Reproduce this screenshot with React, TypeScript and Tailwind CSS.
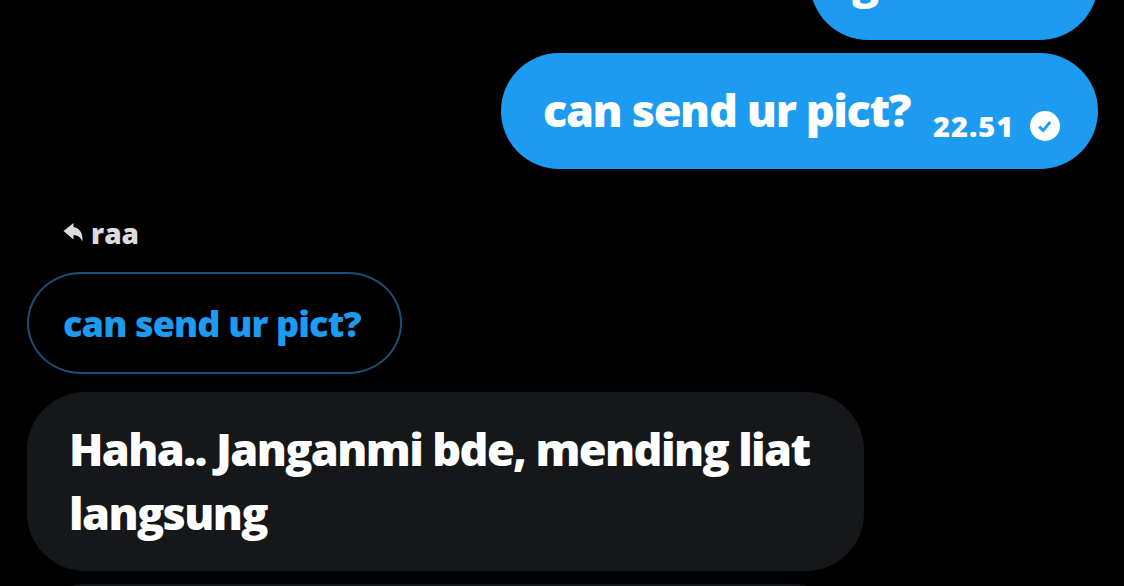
import React from 'react';

function SentBadge() {
    return (
        <svg viewBox="0 0 30 30" className="h-[30px] w-[30px] shrink-0">
            <circle cx="15" cy="15" r="15" fill="#fff" />
            <path d="M9.200 15.600l4 3.800 7-8.400" fill="none" stroke="#1d9bf0" strokeWidth="2.9" />
        </svg>
    );
}

function ReplyArrow() {
    return (
        <svg viewBox="0 0 20 19" className="h-[19px] w-[20px] shrink-0" fill="#dcdcdc">
            <path d="M.5 7.900L10.500 0v4C16.500 4.800 20.500 10.500 19.300 18.600C17.800 14.600 15 12.400 10.500 12.100v4.300z" />
        </svg>
    );
}

export default function App() {
    return (
        <div className="flex h-[586px] w-[1124px] flex-col overflow-hidden bg-black pl-[27px] pr-[26px] font-['Open_Sans',sans-serif] font-extrabold text-white whitespace-nowrap">
            {/* Outgoing */}
            <div className="-mt-[76px] flex h-[116px] w-[288px] shrink-0 self-end rounded-[58px] bg-[#1d9bf0] pl-[42px] pt-[25px] text-[45px] leading-[64px]">
                g
            </div>
            <div className="mt-[13px] flex h-[116px] w-[597px] shrink-0 self-end rounded-[58px] bg-[#1d9bf0] pl-[42px] pt-[25px]">
                <span className="w-[390px] text-[45px] leading-[64px] tracking-[-1.35px]">can send ur pict?</span>
                <span className="mt-[28px] w-[97px] text-[29px] leading-[40px] tracking-[1px]">22.51</span>
                <span className="mt-[32.5px]"><SentBadge /></span>
            </div>

            {/* Quoted message */}
            <div className="mt-[45px] flex h-[40px] shrink-0 pl-[36px]">
                <span className="mt-[9px]"><ReplyArrow /></span>
                <span className="ml-[8px] text-[28px] leading-[38px] text-[#dcdcdc]">raa</span>
            </div>
            <div className="mt-[18px] flex h-[102px] w-[375px] shrink-0 items-center rounded-[54px/51px] border-2 border-[#1a4f78] pl-[34px] pt-px text-[36px] tracking-[-0.85px] text-[#1d9bf0]">
                can send ur pict?
            </div>

            {/* Incoming */}
            <div className="mt-[18px] h-[179px] w-[837px] shrink-0 rounded-[58px] bg-[#161719] pl-[42px] pt-[25px] text-[45px] leading-[64px]">
                <p className="tracking-[-1.62px]">Haha.. Janganmi bde, mending liat</p>
                <p className="tracking-[-1.6px]">langsung</p>
            </div>
            <div className="mt-[13px] h-[116px] w-[824px] shrink-0 rounded-[58px] bg-[#161719]" />
        </div>
    );
}
